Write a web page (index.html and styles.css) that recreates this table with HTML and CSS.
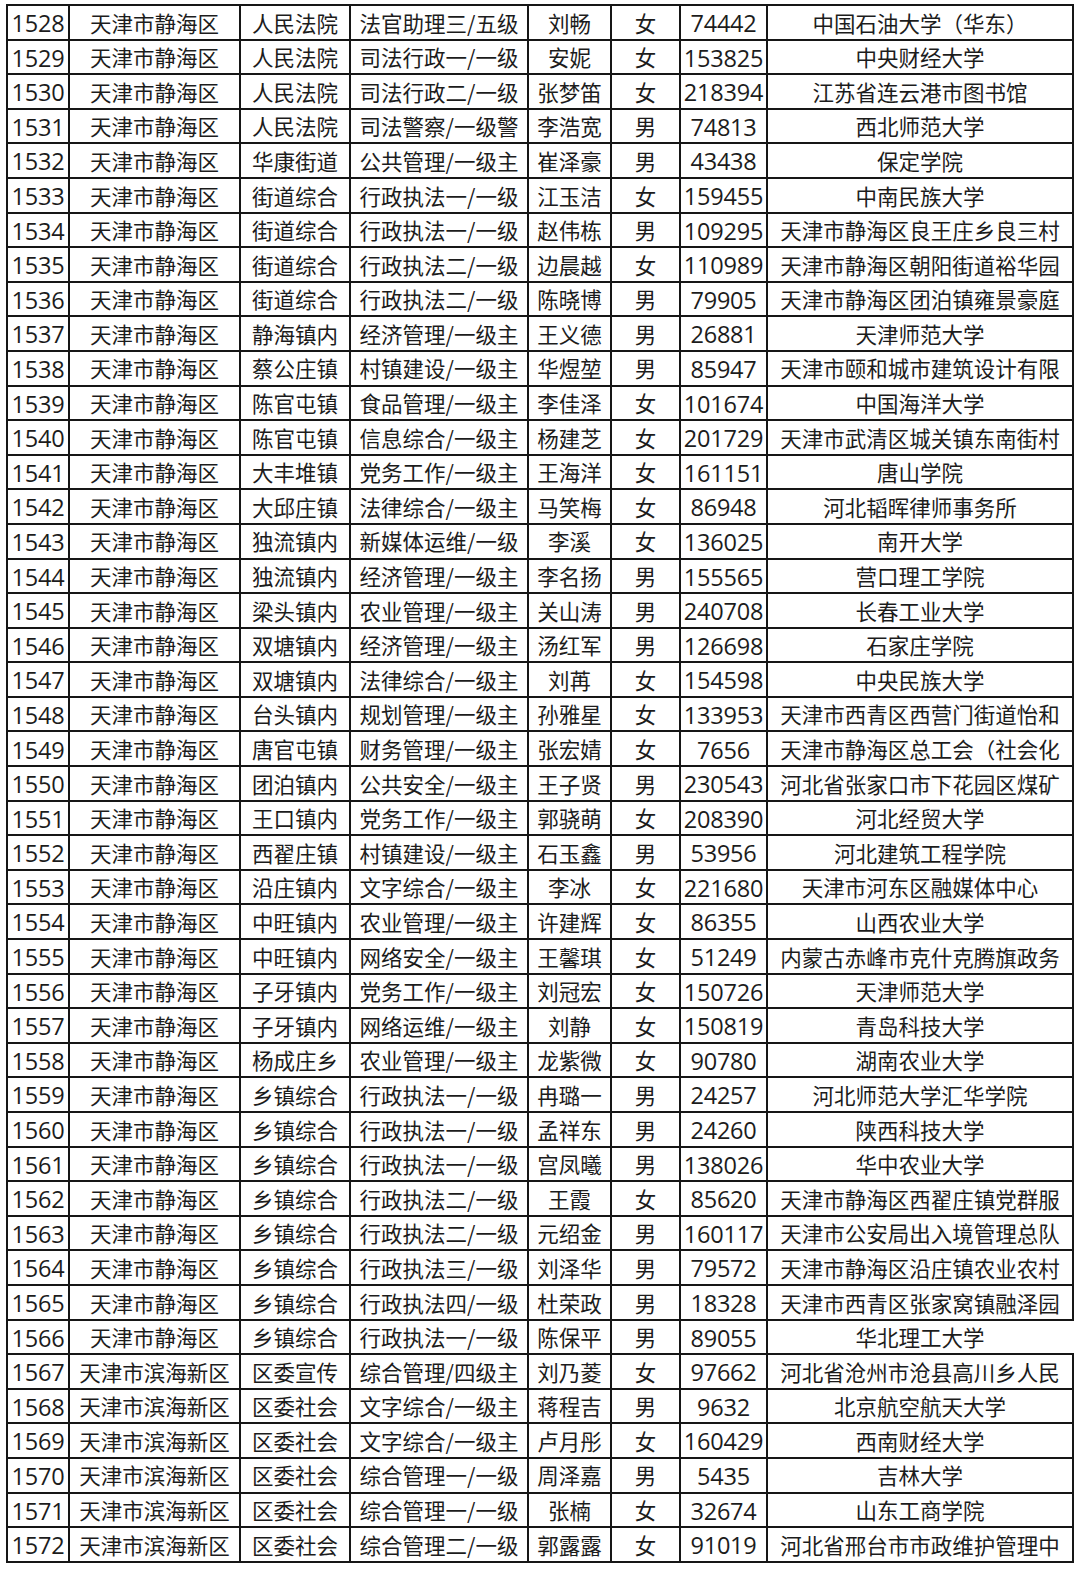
FILE: index.html
```html
<!DOCTYPE html>
<html lang="zh-CN">
<head>
<meta charset="utf-8">
<title>名单</title>
<link rel="stylesheet" href="styles.css">
</head>
<body>
<table class="roster">
<colgroup>
<col class="c-no"><col class="c-area"><col class="c-unit"><col class="c-post"><col class="c-name"><col class="c-sex"><col class="c-id"><col class="c-school">
</colgroup>
<tbody>
<tr><td class="num">1528</td><td>天津市静海区</td><td>人民法院</td><td>法官助理三/五级</td><td>刘畅</td><td>女</td><td class="num">74442</td><td>中国石油大学（华东）</td></tr>
<tr><td class="num">1529</td><td>天津市静海区</td><td>人民法院</td><td>司法行政一/一级</td><td>安妮</td><td>女</td><td class="num">153825</td><td>中央财经大学</td></tr>
<tr><td class="num">1530</td><td>天津市静海区</td><td>人民法院</td><td>司法行政二/一级</td><td>张梦笛</td><td>女</td><td class="num">218394</td><td>江苏省连云港市图书馆</td></tr>
<tr><td class="num">1531</td><td>天津市静海区</td><td>人民法院</td><td>司法警察/一级警</td><td>李浩宽</td><td>男</td><td class="num">74813</td><td>西北师范大学</td></tr>
<tr><td class="num">1532</td><td>天津市静海区</td><td>华康街道</td><td>公共管理/一级主</td><td>崔泽豪</td><td>男</td><td class="num">43438</td><td>保定学院</td></tr>
<tr><td class="num">1533</td><td>天津市静海区</td><td>街道综合</td><td>行政执法一/一级</td><td>江玉洁</td><td>女</td><td class="num">159455</td><td>中南民族大学</td></tr>
<tr><td class="num">1534</td><td>天津市静海区</td><td>街道综合</td><td>行政执法一/一级</td><td>赵伟栋</td><td>男</td><td class="num">109295</td><td>天津市静海区良王庄乡良三村</td></tr>
<tr><td class="num">1535</td><td>天津市静海区</td><td>街道综合</td><td>行政执法二/一级</td><td>边晨越</td><td>女</td><td class="num">110989</td><td>天津市静海区朝阳街道裕华园</td></tr>
<tr><td class="num">1536</td><td>天津市静海区</td><td>街道综合</td><td>行政执法二/一级</td><td>陈晓博</td><td>男</td><td class="num">79905</td><td>天津市静海区团泊镇雍景豪庭</td></tr>
<tr><td class="num">1537</td><td>天津市静海区</td><td>静海镇内</td><td>经济管理/一级主</td><td>王义德</td><td>男</td><td class="num">26881</td><td>天津师范大学</td></tr>
<tr><td class="num">1538</td><td>天津市静海区</td><td>蔡公庄镇</td><td>村镇建设/一级主</td><td>华煜堃</td><td>男</td><td class="num">85947</td><td>天津市颐和城市建筑设计有限</td></tr>
<tr><td class="num">1539</td><td>天津市静海区</td><td>陈官屯镇</td><td>食品管理/一级主</td><td>李佳泽</td><td>女</td><td class="num">101674</td><td>中国海洋大学</td></tr>
<tr><td class="num">1540</td><td>天津市静海区</td><td>陈官屯镇</td><td>信息综合/一级主</td><td>杨建芝</td><td>女</td><td class="num">201729</td><td>天津市武清区城关镇东南街村</td></tr>
<tr><td class="num">1541</td><td>天津市静海区</td><td>大丰堆镇</td><td>党务工作/一级主</td><td>王海洋</td><td>女</td><td class="num">161151</td><td>唐山学院</td></tr>
<tr><td class="num">1542</td><td>天津市静海区</td><td>大邱庄镇</td><td>法律综合/一级主</td><td>马笑梅</td><td>女</td><td class="num">86948</td><td>河北韬晖律师事务所</td></tr>
<tr><td class="num">1543</td><td>天津市静海区</td><td>独流镇内</td><td>新媒体运维/一级</td><td>李溪</td><td>女</td><td class="num">136025</td><td>南开大学</td></tr>
<tr><td class="num">1544</td><td>天津市静海区</td><td>独流镇内</td><td>经济管理/一级主</td><td>李名扬</td><td>男</td><td class="num">155565</td><td>营口理工学院</td></tr>
<tr><td class="num">1545</td><td>天津市静海区</td><td>梁头镇内</td><td>农业管理/一级主</td><td>关山涛</td><td>男</td><td class="num">240708</td><td>长春工业大学</td></tr>
<tr><td class="num">1546</td><td>天津市静海区</td><td>双塘镇内</td><td>经济管理/一级主</td><td>汤红军</td><td>男</td><td class="num">126698</td><td>石家庄学院</td></tr>
<tr><td class="num">1547</td><td>天津市静海区</td><td>双塘镇内</td><td>法律综合/一级主</td><td>刘苒</td><td>女</td><td class="num">154598</td><td>中央民族大学</td></tr>
<tr><td class="num">1548</td><td>天津市静海区</td><td>台头镇内</td><td>规划管理/一级主</td><td>孙雅星</td><td>女</td><td class="num">133953</td><td>天津市西青区西营门街道怡和</td></tr>
<tr><td class="num">1549</td><td>天津市静海区</td><td>唐官屯镇</td><td>财务管理/一级主</td><td>张宏婧</td><td>女</td><td class="num">7656</td><td>天津市静海区总工会（社会化</td></tr>
<tr><td class="num">1550</td><td>天津市静海区</td><td>团泊镇内</td><td>公共安全/一级主</td><td>王子贤</td><td>男</td><td class="num">230543</td><td>河北省张家口市下花园区煤矿</td></tr>
<tr><td class="num">1551</td><td>天津市静海区</td><td>王口镇内</td><td>党务工作/一级主</td><td>郭骁萌</td><td>女</td><td class="num">208390</td><td>河北经贸大学</td></tr>
<tr><td class="num">1552</td><td>天津市静海区</td><td>西翟庄镇</td><td>村镇建设/一级主</td><td>石玉鑫</td><td>男</td><td class="num">53956</td><td>河北建筑工程学院</td></tr>
<tr><td class="num">1553</td><td>天津市静海区</td><td>沿庄镇内</td><td>文字综合/一级主</td><td>李冰</td><td>女</td><td class="num">221680</td><td>天津市河东区融媒体中心</td></tr>
<tr><td class="num">1554</td><td>天津市静海区</td><td>中旺镇内</td><td>农业管理/一级主</td><td>许建辉</td><td>女</td><td class="num">86355</td><td>山西农业大学</td></tr>
<tr><td class="num">1555</td><td>天津市静海区</td><td>中旺镇内</td><td>网络安全/一级主</td><td>王馨琪</td><td>女</td><td class="num">51249</td><td>内蒙古赤峰市克什克腾旗政务</td></tr>
<tr><td class="num">1556</td><td>天津市静海区</td><td>子牙镇内</td><td>党务工作/一级主</td><td>刘冠宏</td><td>女</td><td class="num">150726</td><td>天津师范大学</td></tr>
<tr><td class="num">1557</td><td>天津市静海区</td><td>子牙镇内</td><td>网络运维/一级主</td><td>刘静</td><td>女</td><td class="num">150819</td><td>青岛科技大学</td></tr>
<tr><td class="num">1558</td><td>天津市静海区</td><td>杨成庄乡</td><td>农业管理/一级主</td><td>龙紫微</td><td>女</td><td class="num">90780</td><td>湖南农业大学</td></tr>
<tr><td class="num">1559</td><td>天津市静海区</td><td>乡镇综合</td><td>行政执法一/一级</td><td>冉璐一</td><td>男</td><td class="num">24257</td><td>河北师范大学汇华学院</td></tr>
<tr><td class="num">1560</td><td>天津市静海区</td><td>乡镇综合</td><td>行政执法一/一级</td><td>孟祥东</td><td>男</td><td class="num">24260</td><td>陕西科技大学</td></tr>
<tr><td class="num">1561</td><td>天津市静海区</td><td>乡镇综合</td><td>行政执法一/一级</td><td>宫凤曦</td><td>男</td><td class="num">138026</td><td>华中农业大学</td></tr>
<tr><td class="num">1562</td><td>天津市静海区</td><td>乡镇综合</td><td>行政执法二/一级</td><td>王霞</td><td>女</td><td class="num">85620</td><td>天津市静海区西翟庄镇党群服</td></tr>
<tr><td class="num">1563</td><td>天津市静海区</td><td>乡镇综合</td><td>行政执法二/一级</td><td>元绍金</td><td>男</td><td class="num">160117</td><td>天津市公安局出入境管理总队</td></tr>
<tr><td class="num">1564</td><td>天津市静海区</td><td>乡镇综合</td><td>行政执法三/一级</td><td>刘泽华</td><td>男</td><td class="num">79572</td><td>天津市静海区沿庄镇农业农村</td></tr>
<tr><td class="num">1565</td><td>天津市静海区</td><td>乡镇综合</td><td>行政执法四/一级</td><td>杜荣政</td><td>男</td><td class="num">18328</td><td>天津市西青区张家窝镇融泽园</td></tr>
<tr><td class="num">1566</td><td>天津市静海区</td><td>乡镇综合</td><td>行政执法一/一级</td><td>陈保平</td><td>男</td><td class="num">89055</td><td class="open-right">华北理工大学</td></tr>
<tr><td class="num">1567</td><td>天津市滨海新区</td><td>区委宣传</td><td>综合管理/四级主</td><td>刘乃菱</td><td>女</td><td class="num">97662</td><td>河北省沧州市沧县高川乡人民</td></tr>
<tr><td class="num">1568</td><td>天津市滨海新区</td><td>区委社会</td><td>文字综合/一级主</td><td>蒋程吉</td><td>男</td><td class="num">9632</td><td>北京航空航天大学</td></tr>
<tr><td class="num">1569</td><td>天津市滨海新区</td><td>区委社会</td><td>文字综合/一级主</td><td>卢月彤</td><td>女</td><td class="num">160429</td><td>西南财经大学</td></tr>
<tr><td class="num">1570</td><td>天津市滨海新区</td><td>区委社会</td><td>综合管理一/一级</td><td>周泽嘉</td><td>男</td><td class="num">5435</td><td>吉林大学</td></tr>
<tr><td class="num">1571</td><td>天津市滨海新区</td><td>区委社会</td><td>综合管理一/一级</td><td>张楠</td><td>女</td><td class="num">32674</td><td>山东工商学院</td></tr>
<tr><td class="num">1572</td><td>天津市滨海新区</td><td>区委社会</td><td>综合管理二/一级</td><td>郭露露</td><td>女</td><td class="num">91019</td><td>河北省邢台市市政维护管理中</td></tr>
</tbody>
</table>
</body>
</html>
```
FILE: styles.css
```css
html, body {
  margin: 0;
  background: #ffffff;
}
body {
  padding: 4px 0 0 6px;
  font-family: "Noto Sans CJK SC", "Noto Sans", sans-serif;
  color: #1c1c1c;
}
.roster {
  border-collapse: collapse;
  table-layout: fixed;
  width: 1068px;
}
.c-no { width: 62px; }
.c-area { width: 171px; }
.c-unit { width: 110px; }
.c-post { width: 178px; }
.c-name { width: 83px; }
.c-sex { width: 69px; }
.c-id { width: 87px; }
.c-school { width: 306px; }
.roster tr {
  height: 34.6px;
}
.roster td {
  border: 2px solid #161616;
  padding: 0;
  text-align: center;
  vertical-align: middle;
  white-space: nowrap;
  overflow: hidden;
  font-size: 21.5px;
  line-height: 1;
}
.roster td.num {
  font-family: "Open Sans", "Noto Sans", sans-serif;
  font-size: 23.5px;
  letter-spacing: -0.2px;
  padding-top: 3px;
}
.roster td.open-right {
  border-right-color: transparent;
}
```
